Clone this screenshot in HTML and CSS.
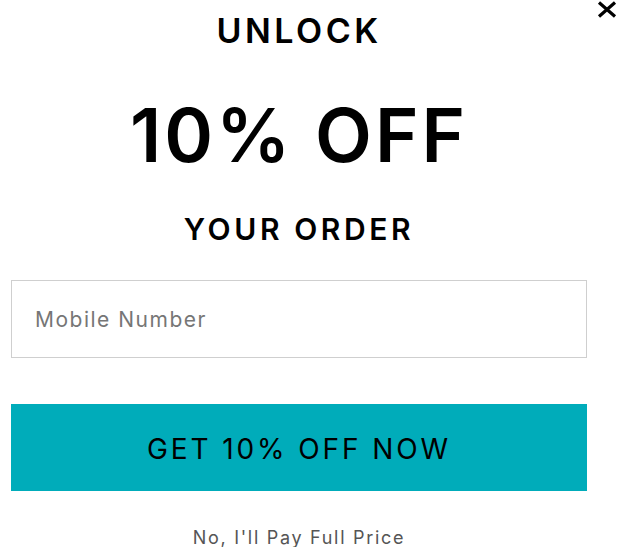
FILE: index.html
```html
<!DOCTYPE html>
<html lang="en">
<head>
  <meta charset="UTF-8">
  <title>Unlock 10% Off</title>
  <link rel="stylesheet" href="styles.css">
</head>
<body>
  <div class="popup">
    <button class="close" aria-label="Close">
      <svg width="20" height="17" viewBox="0 0 20 17">
        <path d="M2 1.5 L18 15.5 M18 1.5 L2 15.5" stroke="#000" stroke-width="3.2" fill="none"/>
      </svg>
    </button>

    <h2 class="kicker">UNLOCK</h2>
    <h1 class="offer">10% OFF</h1>
    <h2 class="sub">YOUR ORDER</h2>

    <input type="tel" class="phone" placeholder="Mobile Number">
    <button class="cta">GET 10% OFF NOW</button>
    <a href="#" class="decline">No, I'll Pay Full Price</a>
  </div>
</body>
</html>
```

FILE: styles.css
```css
body {
  margin: 0;
  background: #fff;
  font-family: Inter, "Liberation Sans", Arial, sans-serif;
  color: #000;
}
.popup {
  position: relative;
  width: 576px;
  padding: 13px 0 0 11px;
  display: flex;
  flex-direction: column;
  align-items: stretch;
  text-align: center;
}
.close {
  position: absolute;
  top: 1px;
  left: 597px;
  padding: 0;
  border: none;
  background: none;
  cursor: pointer;
}
.close svg {
  display: block;
}
h1, h2 {
  margin: 0;
  font-weight: 600;
}
.kicker {
  font-size: 34px;
  line-height: 35px;
  letter-spacing: 3.5px;
}
.offer {
  margin-top: 50px;
  font-size: 74px;
  line-height: 75px;
  letter-spacing: 3px;
}
.sub {
  margin-top: 41px;
  font-size: 30px;
  line-height: 30px;
  letter-spacing: 3.6px;
}
.phone {
  box-sizing: border-box;
  margin-top: 36px;
  height: 78px;
  width: 100%;
  padding: 0 0 0 23px;
  border: 1px solid #cfcfcf;
  font-family: inherit;
  font-size: 21px;
  letter-spacing: 1.5px;
  outline: none;
}
.phone::placeholder {
  color: #767676;
}
.cta {
  margin-top: 46px;
  height: 87px;
  padding-top: 3px;
  border: none;
  background: #00acba;
  color: #000;
  font-family: inherit;
  font-size: 28px;
  letter-spacing: 2.9px;
  cursor: pointer;
}
.decline {
  margin-top: 38px;
  font-size: 18px;
  line-height: 18px;
  letter-spacing: 1.7px;
  color: #555;
  text-decoration: none;
}
```
